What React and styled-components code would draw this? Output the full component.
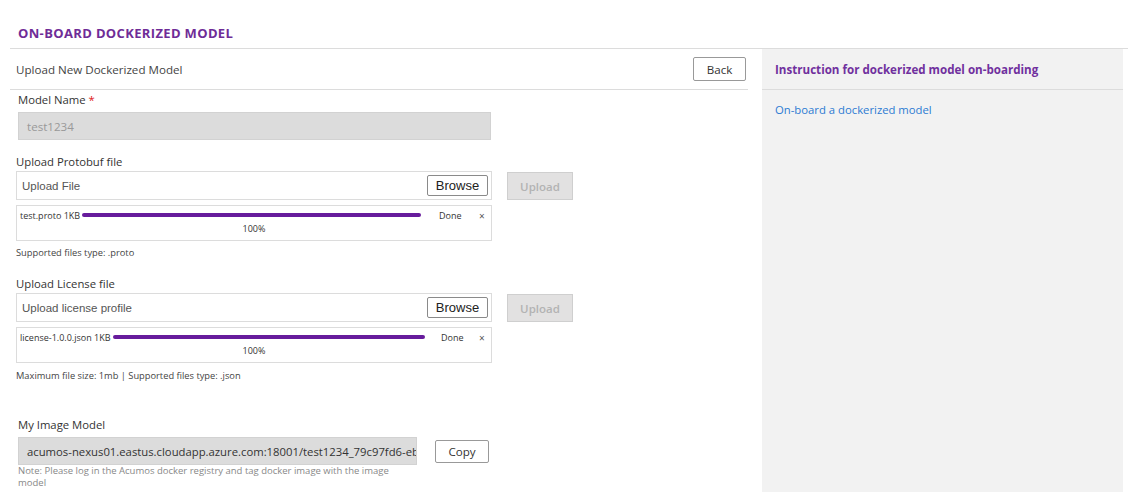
import React from "react";
import styled, { createGlobalStyle } from "styled-components";

const Global = createGlobalStyle`
  html, body { margin: 0; padding: 0; background: #fff; }
  body { font-family: "Open Sans", "Liberation Sans", sans-serif; color: #333; }
  * { box-sizing: border-box; }
`;

const Page = styled.div`
  width: 1131px;
  height: 492px;
  padding: 0 3px 0 10px;
  overflow: hidden;
  display: flex;
  flex-direction: column;
`;

const TitleBar = styled.div`
  height: 49px;
  border-bottom: 1px solid #dcdcdc;
  display: flex;
  align-items: flex-end;
  padding: 0 0 6px 8px;
`;

const Title = styled.h1`
  margin: 0;
  font-size: 13px;
  font-weight: 700;
  letter-spacing: 0.35px;
  color: #6f2c97;
  line-height: 17px;
`;

const Body = styled.div`
  flex: 1;
  display: flex;
  gap: 14px;
  min-height: 0;
`;

const Left = styled.div`
  width: 738px;
  display: flex;
  flex-direction: column;
`;

const Right = styled.aside`
  width: 361px;
  background: #f2f2f2;
`;

const SectionHead = styled.div`
  height: 41px;
  border-bottom: 1px solid #dcdcdc;
  display: flex;
  align-items: center;
  justify-content: space-between;
  padding: 0 2px 0 6px;
`;

const SubTitle = styled.span`
  font-size: 11.6px;
  color: #444;
`;

const OutlineButton = styled.button`
  height: ${(p) => p.$h || 24}px;
  width: ${(p) => p.$w || 53}px;
  background: #fff;
  border: 1px solid #999;
  border-radius: 2px;
  font-family: "Open Sans", sans-serif;
  font-size: 11.6px;
  color: #333;
  padding: 0;
  margin-top: ${(p) => p.$mt || 0}px;
  cursor: pointer;
`;

const Form = styled.div`
  padding: 0 6px;
`;

const Label = styled.div`
  font-size: 11.3px;
  line-height: 16px;
  color: #333;
  margin: ${(p) => p.$mt}px 0 ${(p) => p.$mb}px ${(p) => p.$ml || 0}px;
`;

const Star = styled.span`
  color: #e02020;
`;

const GrayInput = styled.div`
  width: ${(p) => p.$w}px;
  height: 28px;
  background: #dcdcdc;
  border: 1px solid #d2d2d2;
  margin-left: 2px;
  display: flex;
  align-items: center;
  padding-left: ${(p) => p.$pl || 8}px;
  font-size: ${(p) => p.$fs || 11.6}px;
  color: ${(p) => p.$color || "#999"};
  white-space: nowrap;
  overflow: hidden;
`;

const UploadRow = styled.div`
  display: flex;
  align-items: flex-start;
  gap: 15px;
`;

const FileBox = styled.div`
  width: 476px;
  height: 29px;
  border: 1px solid #dcdcdc;
  display: flex;
  align-items: center;
  justify-content: space-between;
  padding: 0 3px 0 5px;
`;

const Placeholder = styled.span`
  font-family: "Liberation Sans", Arial, sans-serif;
  font-size: 11.5px;
  color: #555;
`;

const BrowseButton = styled.button`
  width: 61px;
  height: 21px;
  background: #fff;
  border: 1px solid #8a8a8a;
  border-radius: 2px;
  font-family: "Liberation Sans", Arial, sans-serif;
  font-size: 13px;
  color: #222;
  padding: 0;
`;

const DisabledButton = styled.button`
  width: 66px;
  height: 28px;
  margin-top: 1px;
  background: #e2e1e1;
  border: 1px solid #cfcfcf;
  font-family: "Open Sans", sans-serif;
  font-size: 11.5px;
  font-weight: 600;
  color: #b3b3b3;
  padding: 0;
`;

const ProgressBox = styled.div`
  width: 476px;
  height: 36px;
  border: 1px solid #dcdcdc;
  margin-top: 5px;
  padding: 2px 3px 0 3px;
  display: flex;
  flex-direction: column;
`;

const ProgressRow = styled.div`
  display: flex;
  align-items: center;
  height: 14px;
  font-size: 9px;
  color: #333;
`;

const FileName = styled.span`
  white-space: nowrap;
`;

const Bar = styled.div`
  flex: 1;
  height: 4px;
  border-radius: 2px;
  background: #671c9c;
  margin-left: 2px;
`;

const Done = styled.span`
  width: ${(p) => p.$w}px;
  padding-left: ${(p) => p.$pl}px;
  text-align: left;
`;

const Close = styled.span`
  width: 9px;
  font-size: 10px;
  color: #555;
  margin-top: 2px;
`;

const Percent = styled.div`
  text-align: center;
  font-size: 9px;
  color: #333;
`;

const Hint = styled.div`
  font-size: 9.3px;
  line-height: 12px;
  color: #444;
  margin-top: ${(p) => p.$mt}px;
`;

const ImageRow = styled.div`
  display: flex;
  align-items: flex-start;
  gap: 18px;
`;

const Note = styled.div`
  font-size: 9.5px;
  line-height: 12px;
  color: #888;
  width: 382px;
  margin-left: 2px;
`;

const PanelHead = styled.div`
  height: 41px;
  border-bottom: 1px solid #dcdcdc;
  display: flex;
  align-items: center;
  padding-left: 13px;
  font-size: 11.6px;
  font-weight: 700;
  color: #70309e;
`;

const Link = styled.a`
  display: block;
  margin: 12px 0 0 13px;
  font-size: 11.3px;
  line-height: 16px;
  color: #2c7bd3;
  text-decoration: none;
`;

function Progress({ name, donePl, doneW }) {
  return (
    <ProgressBox>
      <ProgressRow>
        <FileName>{name}</FileName>
        <Bar />
        <Done $pl={donePl} $w={doneW}>Done</Done>
        <Close>×</Close>
      </ProgressRow>
      <Percent>100%</Percent>
    </ProgressBox>
  );
}

export default function App() {
  return (
    <>
      <Global />
      <Page>
        <TitleBar>
          <Title>ON-BOARD DOCKERIZED MODEL</Title>
        </TitleBar>
        <Body>
          <Left>
            <SectionHead>
              <SubTitle>Upload New Dockerized Model</SubTitle>
              <OutlineButton>Back</OutlineButton>
            </SectionHead>
            <Form>
              <Label $mt={2} $mb={4} $ml={2}>
                Model Name <Star>*</Star>
              </Label>
              <GrayInput $w={473}>test1234</GrayInput>

              <Label $mt={14} $mb={1}>Upload Protobuf file</Label>
              <UploadRow>
                <FileBox>
                  <Placeholder>Upload File</Placeholder>
                  <BrowseButton>Browse</BrowseButton>
                </FileBox>
                <DisabledButton disabled>Upload</DisabledButton>
              </UploadRow>
              <Progress name="test.proto 1KB" donePl={18} doneW={58} />
              <Hint $mt={6}>Supported files type: .proto</Hint>

              <Label $mt={17} $mb={1}>Upload License file</Label>
              <UploadRow>
                <FileBox>
                  <Placeholder>Upload license profile</Placeholder>
                  <BrowseButton>Browse</BrowseButton>
                </FileBox>
                <DisabledButton disabled>Upload</DisabledButton>
              </UploadRow>
              <Progress name="license-1.0.0.json 1KB" donePl={16} doneW={54} />
              <Hint $mt={7}>Maximum file size: 1mb | Supported files type: .json</Hint>

              <Label $mt={35} $mb={4} $ml={2}>My Image Model</Label>
              <ImageRow>
                <GrayInput $w={399} $pl={8} $color="#333" $fs={11.3}>
                  acumos-nexus01.eastus.cloudapp.azure.com:18001/test1234_79c97fd6-eb
                </GrayInput>
                <OutlineButton $w={54} $h={23} $mt={3}>Copy</OutlineButton>
              </ImageRow>
              <Note>
                Note: Please log in the Acumos docker registry and tag docker image with the image model
              </Note>
            </Form>
          </Left>
          <Right>
            <PanelHead>Instruction for dockerized model on-boarding</PanelHead>
            <Link href="#">On-board a dockerized model</Link>
          </Right>
        </Body>
      </Page>
    </>
  );
}
